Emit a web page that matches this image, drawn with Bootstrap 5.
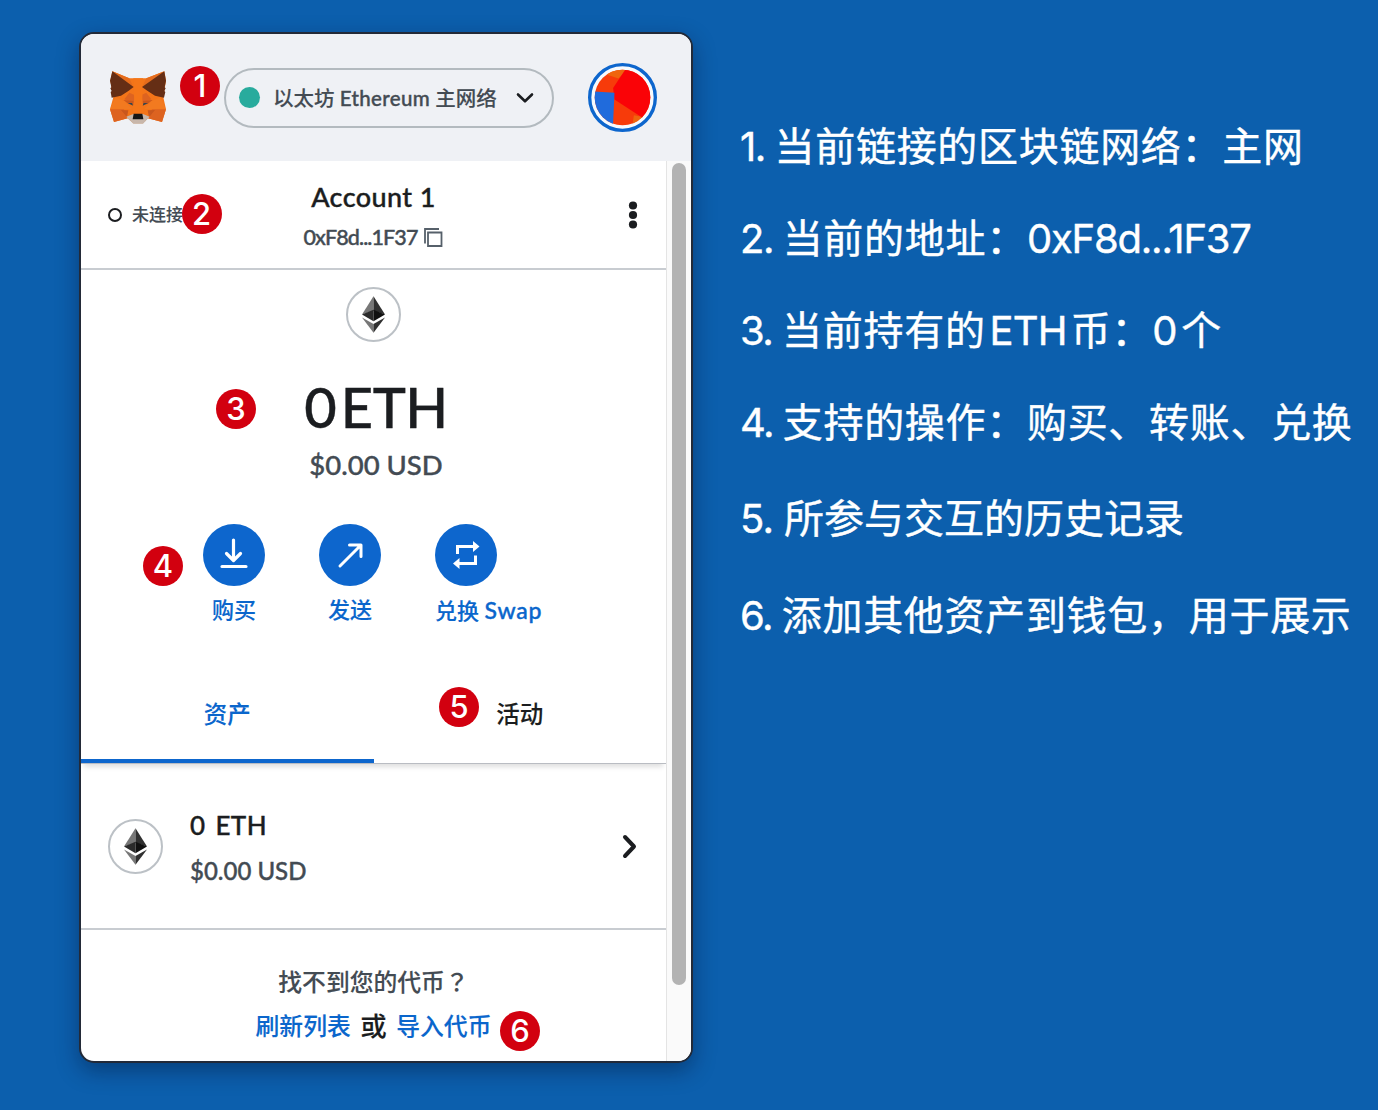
<!DOCTYPE html>
<html lang="zh-CN">
<head>
<meta charset="utf-8">
<meta name="viewport" content="width=device-width, initial-scale=1">
<title>MetaMask 钱包界面说明</title>
<link href="https://cdn.jsdelivr.net/npm/bootstrap@5.3.0/dist/css/bootstrap.min.css" rel="stylesheet">
<style>
body{background:#0c5fad;font-family:Lato,"Noto Sans CJK SC",sans-serif;font-weight:500;color:#1b1d20;width:1378px;height:1110px;overflow:hidden}
svg{display:block;flex:none}
.stage{padding:32px 0 0 79px}
.wallet{width:614px;height:1031px;border:2px solid #232a38;border-radius:15px;background:#fff;box-shadow:0 8px 22px rgba(0,15,45,.4);flex:none;-webkit-text-stroke:.12px}
.wallet-inner{border-radius:13px;height:1027px}
.topbar{height:127px;background:#eff1f5;padding:0 34px 0 27px}
.net-pill{width:330px;height:60px;border:2px solid #b3babf;border-radius:30px;padding:0 17px 0 13px;margin-left:56px;color:#434b53;font-size:20.5px}
.net-dot{width:21px;height:21px;background:#28ab9d;margin-right:13px}
.net-name{padding-top:2px}
.latin{-webkit-text-stroke:.4px}
.pane{width:585px}
.track{width:25px;background:#fafafa;border-left:1.5px solid #e4e4e4;padding:2px 0 0 5px}
.thumb{width:14px;height:822px;background:#b3b3b3;border-radius:7px}
.grayish{color:#434b53}
.blueish{color:#0a66cc}
.acct{height:109px;border-bottom:2px solid #c8ccd1;padding:0 27px}
.acct-side{width:100px}
.acct-status{font-size:17px}
.acct-name{font-size:27px;line-height:40px;letter-spacing:.4px;padding-top:5px}
.acct-addr{font-size:21.5px;line-height:40px;letter-spacing:-.9px}
.state-dot{width:14px;height:14px;border:2px solid #1b1d20;margin-right:10px}
.coin{width:55px;height:55px;border:2px solid #bcc1c6}
.coin-top{margin-top:17px}
.balance{font-size:56px;line-height:60px;margin-top:35px;word-spacing:-9px;letter-spacing:-.5px;padding-left:5px;-webkit-text-stroke:.4px}
.fiat{font-size:27.5px;line-height:36px;margin-top:10px;padding-left:5px}
.acts{gap:54px;margin-top:41px;padding-right:47px}
.act{width:62px}
.act-icon{width:62px;height:62px;background:#0d66cd}
.act-label{font-size:22px;line-height:30px;margin-top:9px}
.tabs-row{height:106px;margin-top:32px;border-bottom:1.5px solid #b9bcc2;box-shadow:0 6px 5px -3px rgba(0,0,0,.13);font-size:23.5px}
.tab-item{width:50%;padding-top:9px}
.tab-on{box-shadow:inset 0 -4px #0d66cd}
.asset{height:166px;border-bottom:2px solid #c8ccd1;padding:0 28px 0 27px}
.asset-text{margin-left:27px;padding-top:4px;line-height:46.5px}
.asset-qty{font-size:26px;word-spacing:3px;letter-spacing:.4px}
.asset-fiat{font-size:24px}
.import-box{padding-top:29px;font-size:23.8px;line-height:44px}
.fullwidth-q{font-family:"Noto Sans CJK TC",sans-serif}
.pin{position:absolute;width:40px;height:40px;background:#d2000f;color:#fff;font:500 31px/40px Inter,sans-serif;text-align:center;border-radius:50%}
.p1{left:180px;top:66px}.p2{left:181.5px;top:194px}.p3{left:216px;top:388.5px}.p4{left:143px;top:546px}.p5{left:439px;top:687px}.p6{left:500px;top:1010.5px}
.notes{margin:82px 0 0 47px;color:#fff;font:400 40px/65px Inter,"Noto Sans CJK SC",sans-serif;-webkit-text-stroke:.4px}
.note{height:64px;margin-bottom:28px;letter-spacing:.7px}
.note-no{letter-spacing:-1.5px}
</style>
<script src="https://cdn.jsdelivr.net/npm/bootstrap@5.3.0/dist/js/bootstrap.bundle.min.js"></script>
</head>
<body class="position-relative">
<svg width="0" height="0" class="position-absolute"><defs>
<symbol id="eth" viewBox="0 0 24 38"><path fill="#777" d="M12 0 0 19 12 15z"/><path fill="#303030" d="M12 0 24 19 12 15z"/><path fill="#2b2b2b" d="M0 19 12 14v12z"/><path fill="#111" d="M24 19 12 14v12z"/><path fill="#777" d="M0 22 12 29v9z"/><path fill="#303030" d="M24 22 12 29v9z"/></symbol>
</defs></svg>
<main class="stage d-flex align-items-start">
<section class="wallet">
<div class="wallet-inner overflow-hidden d-flex flex-column">
<header class="topbar d-flex align-items-center">
<svg width="60" height="56" viewBox="114 150 180 168">
<path fill="#f37519" d="M127 154 178 175H229L283 154 288 182 280 232 288 268 276 306 234 295 219 310H190L173 295 132 306 120 268 130 232 121 182z"/>
<path fill="#e56c1c" d="M127 154 178 175 190 200zM283 154 229 175 217 200z"/>
<path fill="#dd6320" d="M120 268H162L173 295 132 306zM288 268H246L234 295 276 306zM178 218 192 224 193 250 163 238zM229 218 216 224 214 250 244 238z"/>
<path fill="#c9571d" d="M153 270 175 271 171 292zM255 270 233 271 237 292zM160 240 190 243 191 256 176 252zM248 240 218 243 217 256 232 252z"/>
<path fill="#f27a20" d="M121 266 137 232 164 244 186 268zM287 266 271 232 244 244 222 268z"/>
<path fill="#f57618" d="M190 175H219L217 236 222 281H187L193 236z"/>
<path fill="#652e15" d="M127 154 191 201 175 213 153 227 125 233 122 216 125 213 121 205 124 202 120 182zM283 154 216 201 233 213 255 227 282 233 286 216 283 213 287 205 284 202 288 182z"/>
<path fill="#c8b7ab" d="M169 290 190 282H219L239 290 219 311H190z"/>
<path fill="#161616" d="M191 281H217L220 298H188z"/>
<path fill="#314650" d="M174 249 186 249 189 257zM234 249 221 249 218 257z"/>
</svg>
<div class="net-pill d-flex align-items-center">
<span class="net-dot rounded-circle"></span><span class="net-name text-nowrap">以太坊 <span class="latin" style="letter-spacing:.35px">Ethereum</span> 主网络</span>
<svg class="ms-auto" width="20" height="12" viewBox="0 0 20 12" fill="none" stroke="#1b1d20" stroke-width="2.6" stroke-linecap="round" stroke-linejoin="round"><path d="M3 2.5 10 9.3 17 2.5"/></svg>
</div>
<svg class="ms-auto" width="69" height="69" viewBox="625 129 206 206">
<clipPath id="disc"><circle cx="728" cy="232" r="83"/></clipPath>
<circle cx="728" cy="232" r="98" fill="#f7fafd" stroke="#0d66cd" stroke-width="10"/>
<g clip-path="url(#disc)"><path fill="#f73b0a" d="M640 140H830V330H640z"/><path fill="#ef650e" d="M660 140H750L716 175 680 163zM762 285 790 290 775 320 757 318z"/><path fill="#fa0307" d="M742 140H830V320L704 238 700 204z"/><path fill="#206bdc" d="M640 214 704 218 699 330H640z"/></g>
</svg>
</header>
<div class="d-flex flex-fill">
<div class="pane">
<div class="acct d-flex justify-content-between align-items-center">
<div class="acct-side acct-status d-flex align-items-center text-nowrap grayish"><span class="state-dot rounded-circle"></span>未连接</div>
<div class="text-center text-nowrap latin">
<div class="acct-name">Account 1</div>
<div class="acct-addr d-flex align-items-center justify-content-center grayish">0xF8d...1F37
<svg style="margin-left:6px" width="20" height="20" fill="none" stroke="#56606a" stroke-width="1.8"><path d="M5 5.5H18.5V19H5zM2 16.5V2H16"/></svg></div>
</div>
<div class="acct-side d-flex justify-content-end"><svg width="12" height="30" fill="#1b1d20"><circle cx="6" cy="5.5" r="4.1"/><circle cx="6" cy="15" r="4.1"/><circle cx="6" cy="24.5" r="4.1"/></svg></div>
</div>
<div class="d-flex flex-column align-items-center">
<div class="coin coin-top rounded-circle d-flex align-items-center justify-content-center"><svg width="23" height="37"><use href="#eth"/></svg></div>
<div class="balance">0 ETH</div>
<div class="fiat grayish latin">$0.00 USD</div>
</div>
<div class="acts d-flex justify-content-center blueish">
<div class="act"><div class="act-icon rounded-circle d-flex align-items-center justify-content-center"><svg width="32" height="34" fill="none" stroke="#fff" stroke-width="3.2" stroke-linecap="round" stroke-linejoin="round"><path d="M15.5 2V22M8.5 15.5 15.5 22.5 22.5 15.5M4 28.5H28"/></svg></div><div class="act-label text-center">购买</div></div>
<div class="act"><div class="act-icon rounded-circle d-flex align-items-center justify-content-center"><svg width="30" height="30" fill="none" stroke="#fff" stroke-width="3" stroke-linecap="round" stroke-linejoin="round"><path d="M5 26 25 6M14.5 5H26V16.5"/></svg></div><div class="act-label text-center">发送</div></div>
<div class="act"><div class="act-icon rounded-circle d-flex align-items-center justify-content-center"><svg width="30" height="30"><path d="M6.5 14V6.5H22M24.5 15.5V23.5H8" fill="none" stroke="#fff" stroke-width="3"/><path fill="#fff" d="M22 1 28.5 6.5 22 12zM8.5 18 2 23.5 8.5 29z"/></svg></div><div class="act-label text-nowrap">兑换 <span class="latin" style="font-size:23px;letter-spacing:.8px">Swap</span></div></div>
</div>
<div class="tabs-row d-flex text-center">
<div class="tab-item tab-on d-flex align-items-center justify-content-center blueish">资产</div>
<div class="tab-item d-flex align-items-center justify-content-center">活动</div>
</div>
<div class="asset d-flex align-items-center">
<div class="coin rounded-circle d-flex align-items-center justify-content-center"><svg width="23" height="37"><use href="#eth"/></svg></div>
<div class="asset-text latin"><div class="asset-qty">0 ETH</div><div class="asset-fiat grayish">$0.00 USD</div></div>
<svg class="ms-auto" width="18" height="28" fill="none" stroke="#1b1d20" stroke-width="4" stroke-linecap="round" stroke-linejoin="round"><path d="M5 5 14 14.5 5 24"/></svg>
</div>
<div class="import-box text-center">
<div class="grayish">找不到您的代币<span class="fullwidth-q" lang="zh-TW">？</span></div>
<div class="d-flex align-items-center justify-content-center" style="gap:9.5px"><span class="blueish">刷新列表</span><span style="font-size:26.5px">或</span><span class="blueish">导入代币</span></div>
</div>
</div>
<div class="track"><div class="thumb"></div></div>
</div>
</div>
</section>
<section class="notes text-nowrap">
<div class="note"><span class="note-no">1. </span>当前链接的区块链网络：主网</div>
<div class="note"><span class="note-no">2. </span>当前的地址：<span style="letter-spacing:-1.2px">0xF8d...1F37</span></div>
<div class="note"><span class="note-no">3. </span>当前持有的<span class="ms-1 me-1" style="letter-spacing:-.8px">ETH</span>币：0<span style="margin-left:3px">个</span></div>
<div class="note" style="margin-bottom:32px"><span class="note-no">4. </span>支持的操作：购买、转账、兑换</div>
<div class="note" style="margin-bottom:33px;letter-spacing:0"><span style="letter-spacing:-.7px">5. </span>所参与交互的历史记录</div>
<div class="note"><span class="note-no">6. </span>添加其他资产到钱包，用于展示</div>
</section>
</main>
<span class="pin p1">1</span><span class="pin p2">2</span><span class="pin p3">3</span><span class="pin p4">4</span><span class="pin p5">5</span><span class="pin p6">6</span>
</body>
</html>
